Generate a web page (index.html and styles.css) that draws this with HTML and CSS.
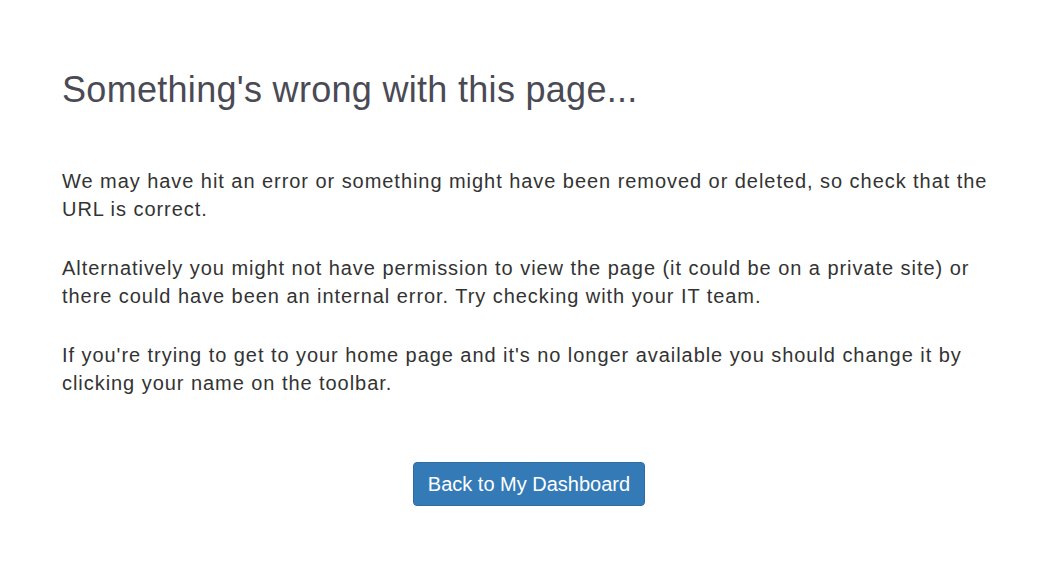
FILE: index.html
```html
<!DOCTYPE html>
<html>
<head>
<meta charset="utf-8">
<link rel="stylesheet" href="styles.css">
</head>
<body>
<div class="page">
  <h1 class="title">Something's wrong with this page...</h1>
  <div class="messages">
    <p class="msg">We may have hit an error or something might have been removed or deleted, so check that the URL is correct.</p>
    <p class="msg">Alternatively you might not have permission to view the page (it could be on a private site) or there could have been an internal error. Try checking with your IT team.</p>
    <p class="msg">If you're trying to get to your home page and it's no longer available you should change it by clicking your name on the toolbar.</p>
  </div>
  <div class="actions">
    <a class="btn" href="#">Back to My Dashboard</a>
  </div>
</div>
</body>
</html>
```
FILE: styles.css
```css
html, body {
  margin: 0;
  padding: 0;
  background: #fff;
}
body {
  font-family: "Liberation Sans", Arial, sans-serif;
  color: #333;
}
.page {
  padding: 66px 55px 0 62px;
  display: flex;
  flex-direction: column;
}
.title {
  margin: 0;
  font-size: 36px;
  font-weight: normal;
  line-height: 48px;
  letter-spacing: 0.3px;
  color: #4a4a55;
}
.messages {
  margin-top: 53px;
  display: flex;
  flex-direction: column;
  gap: 31px;
}
.msg {
  margin: 0;
  font-size: 20px;
  line-height: 28px;
  letter-spacing: 0.95px;
  color: #333;
}
.actions {
  margin-top: 65px;
  display: flex;
  justify-content: center;
}
.btn {
  display: inline-block;
  background: #337ab7;
  color: #fff;
  text-decoration: none;
  font-size: 20px;
  line-height: 26px;
  padding: 8px 14px;
  border-radius: 4px;
  border: 1px solid #2e6da4;
}
```
